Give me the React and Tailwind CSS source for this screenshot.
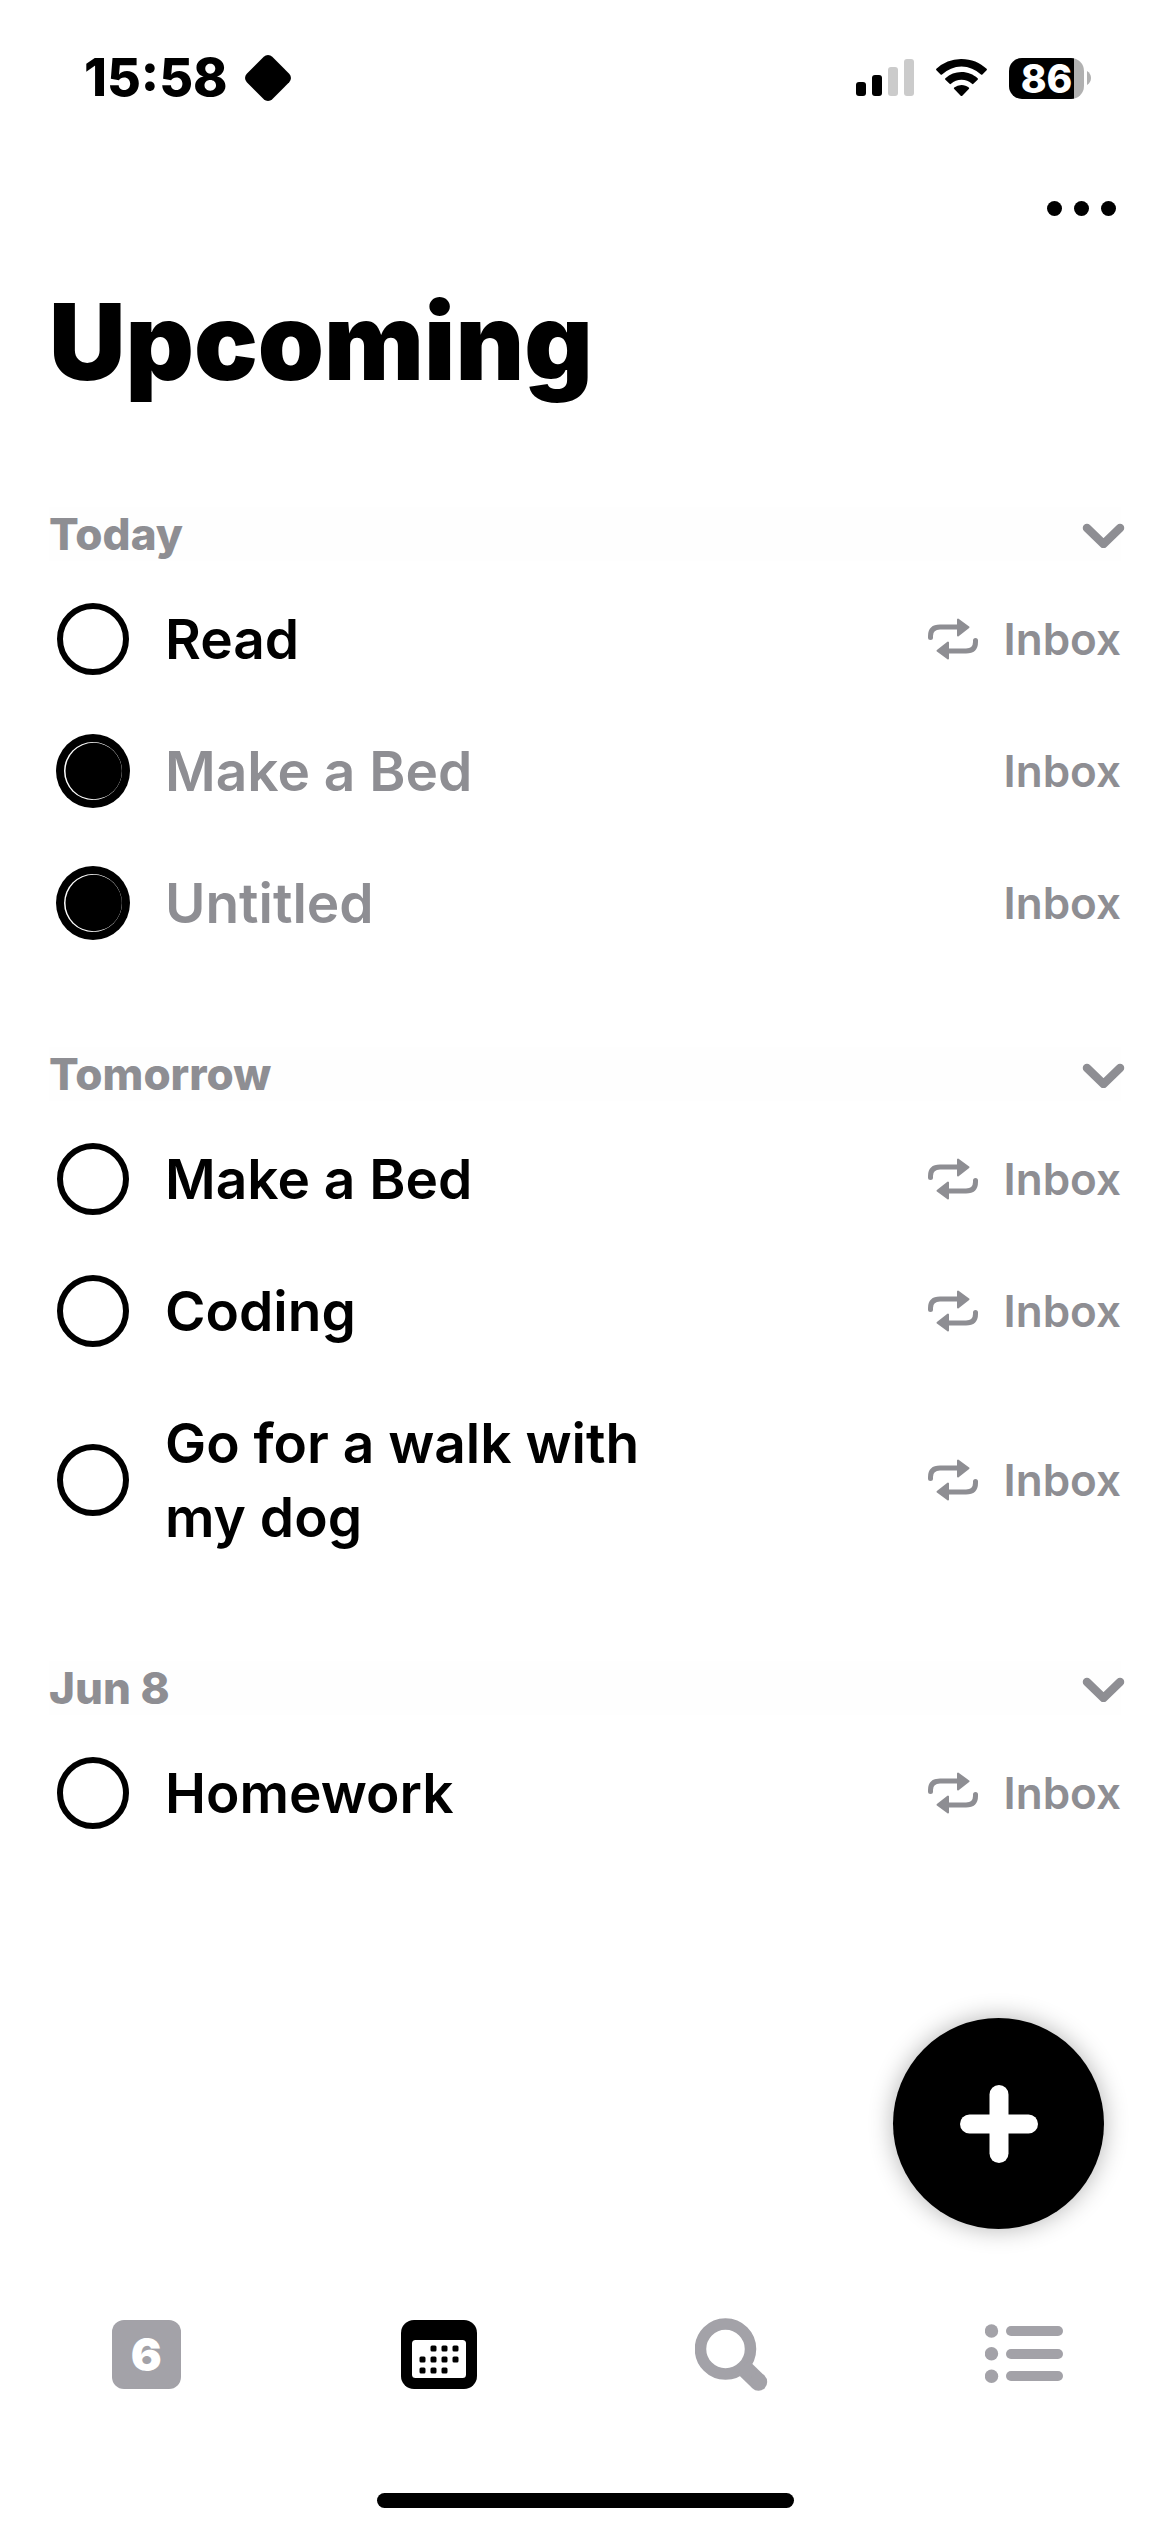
import { useState } from "react";

const sections = [
  {
    title: "Today",
    tasks: [
      { id: "read", name: "Read", list: "Inbox", repeats: true, done: false },
      { id: "bed-today", name: "Make a Bed", list: "Inbox", repeats: false, done: true },
      { id: "untitled", name: "Untitled", list: "Inbox", repeats: false, done: true },
    ],
  },
  {
    title: "Tomorrow",
    tasks: [
      { id: "bed-tomorrow", name: "Make a Bed", list: "Inbox", repeats: true, done: false },
      { id: "coding", name: "Coding", list: "Inbox", repeats: true, done: false },
      { id: "walk", name: "Go for a walk with my dog", list: "Inbox", repeats: true, done: false },
    ],
  },
  {
    title: "Jun 8",
    tasks: [{ id: "homework", name: "Homework", list: "Inbox", repeats: true, done: false }],
  },
];

function StatusBar() {
  return (
    <header className="flex h-[156px] items-center justify-between pl-[84px] pr-[79px]">
      <div className="flex items-center gap-4">
        <time className="text-[52px] font-extrabold leading-none">15:58</time>
        <svg className="size-12" viewBox="0 0 48 48" aria-hidden="true">
          <rect x="6" y="6" width="36" height="36" rx="6" transform="rotate(45 24 24)" />
        </svg>
      </div>
      <div className="flex items-center gap-[22px]">
        <svg className="h-[38px] w-[58px]" viewBox="0 0 58 38" role="img" aria-label="Signal">
          <rect x="0" y="23" width="10" height="14" rx="3" />
          <rect x="16" y="16" width="10" height="21" rx="3" />
          <rect x="32" y="8" width="10" height="29" rx="3" fill="#cbcbcb" />
          <rect x="48" y="0" width="10" height="37" rx="3" fill="#cbcbcb" />
        </svg>
        <svg className="h-[38px] w-[51px]" viewBox="0 0 51 38" role="img" aria-label="Wi-Fi">
          <path d="M25.500 0C35.300 0 44.200 3.700 50.600 9.800a1 1 0 0 1 0 1.400L46.400 15.400a1 1 0 0 1-1.400 0A28.300 28.300 0 0 0 6 15.400a1 1 0 0 1-1.400 0L.4 11.200a1 1 0 0 1 0-1.400A36.400 36.400 0 0 1 25.500 0Z" />
          <path d="M25.500 13c6.200 0 11.900 2.400 16.100 6.200a1 1 0 0 1 0 1.500l-4.200 4.100a1 1 0 0 1-1.400 0 15.600 15.600 0 0 0-21 0 1 1 0 0 1-1.400 0l-4.200-4.100a1 1 0 0 1 0-1.500A24 24 0 0 1 25.500 13Z" />
          <path d="M25.500 26c2.800 0 5.300 1 7.300 2.600a1 1 0 0 1 0 1.500l-6.500 6.600a1.100 1.100 0 0 1-1.600 0l-6.500-6.600a1 1 0 0 1 0-1.500A11.500 11.500 0 0 1 25.500 26Z" />
        </svg>
        <div className="flex items-center gap-[3px]">
          <div className="flex h-[41px] w-[75px] items-center justify-center rounded-[13px] bg-linear-to-r from-black from-[65px] to-[#b1b1b1] to-[65px]">
            <span className="text-[39px] font-extrabold leading-none text-white">86</span>
          </div>
          <svg className="h-[14px] w-1" viewBox="0 0 4 14" aria-hidden="true">
            <path d="M0 0c2.500 1.500 4 4 4 7s-1.500 5.500-4 7Z" fill="#b1b1b1" />
          </svg>
        </div>
      </div>
    </header>
  );
}

function RepeatIcon() {
  return (
    <svg className="h-[42px] w-[50px]" viewBox="0 0 50 42" role="img" aria-label="Repeats">
      <g fill="none" stroke="currentColor" strokeWidth="5" strokeLinecap="round">
        <path d="M2.500 19.500V18C2.500 12 6 9 12 9H31" />
        <path d="M47.500 22.500V24C47.500 30 44 33 38 33H19" />
      </g>
      <g fill="currentColor" stroke="currentColor" strokeWidth="2" strokeLinejoin="round">
        <path d="M30 1.500V17.500L40.500 9.200Z" />
        <path d="M20 24.500V40.500L9.500 32.800Z" />
      </g>
    </svg>
  );
}

function Task({ task }) {
  const [done, setDone] = useState(task.done);
  return (
    <li className="flex min-h-[132px] items-center justify-between py-[29px] pl-2">
      <label className="flex items-center gap-9">
        <span className="grid shrink-0 place-items-center">
          <input
            type="checkbox"
            checked={done}
            onChange={() => setDone(!done)}
            className="peer col-start-1 row-start-1 size-[72px] appearance-none rounded-full border-6 border-black"
          />
          <svg
            className="pointer-events-none invisible col-start-1 row-start-1 -m-px size-[74px] peer-checked:visible"
            viewBox="0 0 74 74"
            aria-hidden="true"
          >
            <circle cx="37" cy="37" r="37" />
            <circle cx="37" cy="37" r="29" fill="#fff" />
            <circle cx="37.700" cy="37" r="28.200" />
          </svg>
        </span>
        <span
          className={
            done
              ? "max-w-[500px] text-[55px] font-semibold leading-[74px] text-[#8e8e93]"
              : "max-w-[500px] text-[55px] font-semibold leading-[74px] text-black"
          }
        >
          {task.name}
        </span>
      </label>
      <div className="flex shrink-0 items-center gap-[26px] text-[#8e8e93]">
        {task.repeats && <RepeatIcon />}
        <span className="text-[44px] font-semibold leading-none">{task.list}</span>
      </div>
    </li>
  );
}

function Section({ section }) {
  const [open, setOpen] = useState(true);
  return (
    <section>
      <button
        type="button"
        aria-expanded={open}
        onClick={() => setOpen(!open)}
        className="mb-3 flex h-[54px] w-full items-center justify-between bg-[#fefefe] text-[#8e8e93]"
      >
        <h2 className="text-[44px] font-extrabold leading-none">{section.title}</h2>
        <svg className="-mr-1 h-7 w-[43px]" viewBox="0 0 43 28" aria-hidden="true">
          <path
            d="M5 8L21.500 24L38 8"
            fill="none"
            stroke="currentColor"
            strokeWidth="8.500"
            strokeLinecap="round"
            strokeLinejoin="round"
          />
        </svg>
      </button>
      {open && (
        <ul>
          {section.tasks.map((task) => (
            <Task key={task.id} task={task} />
          ))}
        </ul>
      )}
    </section>
  );
}

function TabBar() {
  const dots = [
    [32, 28], [43, 28], [54, 28],
    [21, 39], [32, 39], [43, 39], [54, 39],
    [21, 50], [32, 50], [43, 50],
  ];
  return (
    <nav className="grid grid-cols-4 text-[#a3a2a8]">
      <button type="button" aria-label="Today" className="flex h-[76px] items-center justify-center">
        <span className="flex size-[69px] items-center justify-center rounded-xl bg-[#a3a2a8] text-[46px] font-black leading-none text-white">
          6
        </span>
      </button>
      <button type="button" aria-label="Upcoming" aria-current="page" className="flex h-[76px] items-center justify-center">
        <svg className="h-[69px] w-[76px]" viewBox="0 0 76 69" aria-hidden="true">
          <rect width="76" height="69" rx="13" fill="#000" />
          <rect x="11" y="20" width="54" height="38" rx="3.500" fill="#fff" />
          {dots.map(([x, y]) => (
            <rect key={`${x}-${y}`} x={x - 2.5} y={y - 2.5} width="6" height="6" rx="1.500" fill="#000" />
          ))}
        </svg>
      </button>
      <button type="button" aria-label="Search" className="flex h-[76px] items-center justify-center">
        <svg className="size-[73px]" viewBox="0 0 73 73" fill="none" stroke="currentColor" aria-hidden="true">
          <circle cx="30.500" cy="31" r="25" strokeWidth="11.500" />
          <path d="M48 49L63.500 64" strokeWidth="17.500" />
          <circle cx="63.500" cy="64" r="8.700" fill="currentColor" stroke="none" />
        </svg>
      </button>
      <button type="button" aria-label="Lists" className="flex h-[76px] items-center justify-center">
        <svg className="h-[60px] w-[78px]" viewBox="0 0 78 60" fill="currentColor" aria-hidden="true">
          <circle cx="6.500" cy="7" r="6.700" />
          <circle cx="6.500" cy="29.700" r="6.700" />
          <circle cx="6.500" cy="52.300" r="6.700" />
          <rect x="21" y="2" width="57" height="10" rx="5" />
          <rect x="21" y="25" width="57" height="10" rx="5" />
          <rect x="21" y="47" width="57" height="10" rx="5" />
        </svg>
      </button>
    </nav>
  );
}

export default function App() {
  return (
    <div className="flex min-h-screen flex-col bg-white font-['Inter',sans-serif] text-black">
      <StatusBar />
      <main className="flex-1 px-[49px]">
        <div className="flex h-[104px] items-center justify-end">
          <button type="button" aria-label="More" className="flex gap-3 pr-[5px]">
            <span className="size-[15px] rounded-full bg-black" />
            <span className="size-[15px] rounded-full bg-black" />
            <span className="size-[15px] rounded-full bg-black" />
          </button>
        </div>
        <h1 className="mt-[22px] text-[106px] font-black leading-[120px]">Upcoming</h1>
        <div className="mt-[105px] flex flex-col gap-[78px]">
          {sections.map((section) => (
            <Section key={section.title} section={section} />
          ))}
        </div>
      </main>
      <button
        type="button"
        aria-label="Add task"
        className="fixed right-[66px] bottom-[303px] flex size-[211px] items-center justify-center rounded-full bg-black shadow-[0_0_24px_rgba(0,0,0,0.3)]"
      >
        <svg className="size-[78px]" viewBox="0 0 78 78" fill="#fff" aria-hidden="true">
          <rect x="0" y="29.500" width="78" height="19" rx="9.500" />
          <rect x="29.500" y="0" width="19" height="78" rx="9.500" />
        </svg>
      </button>
      <footer className="pb-6">
        <TabBar />
        <div className="mx-auto mt-[101px] h-[15px] w-[417px] rounded-full bg-black" />
      </footer>
    </div>
  );
}
